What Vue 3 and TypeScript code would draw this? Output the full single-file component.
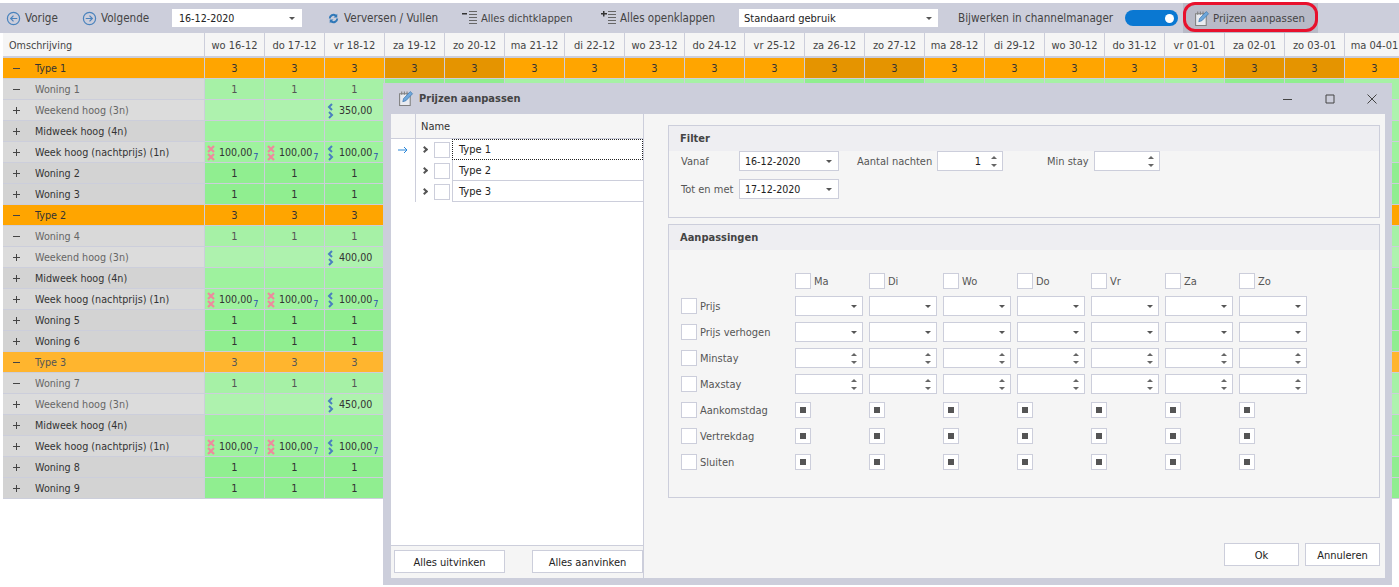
<template>
  <div class="page">
    <div class="toolbar">
      <span class="tool first">
        <svg class="nav-icon" viewBox="0 0 16 16"><circle cx="8" cy="8" r="6.500" /><path d="M12 8H5M8 5 5 8l3 3" /></svg>
        Vorige
      </span>
      <span class="tool next">
        <svg class="nav-icon" viewBox="0 0 16 16"><circle cx="8" cy="8" r="6.500" /><path d="M4 8h7M8 5l3 3-3 3" /></svg>
        Volgende
      </span>
      <div class="combo date-combo">16-12-2020<i class="caret"></i></div>
      <span class="tool refresh">
        <svg class="refresh-icon" viewBox="0 0 16 16"><path d="M3 8a5 5 0 0 1 8-4l1-1v4H8l1.500-1.500A3 3 0 0 0 5 8Z" /><path d="M13 8a5 5 0 0 1-8 4l-1 1V9h4l-1.500 1.500A3 3 0 0 0 11 8Z" /></svg>
        Verversen / Vullen
      </span>
      <span class="tool collapse">
        <svg class="tree-icon" viewBox="0 0 16 16"><path class="dark" d="M0 3h5v1.500H0Z" /><path d="M7 1.500h8M7 4.500h8M7 7.500h8M7 10.500h8M7 13.500h8" /></svg>
        Alles dichtklappen
      </span>
      <span class="tool expand">
        <svg class="tree-icon" viewBox="0 0 16 16"><path class="dark" d="M2 1h1.500v2H6v1.500H3.500v2H2v-2H0V3h2Z" /><path d="M7 1.500h8M7 4.500h8M7 7.500h8M7 10.500h8M7 13.500h8" /></svg>
        Alles openklappen
      </span>
      <div class="combo mode-combo">Standaard gebruik<i class="caret"></i></div>
      <span class="sync-label">Bijwerken in channelmanager</span>
      <span class="toggle"><i></i></span>
      <span class="tool highlight">
        <svg class="edit-icon" viewBox="0 0 16 16">
          <path class="sheet" d="M1.500 3.500h10v11h-10Z" />
          <path class="rings" d="M3.500 1.500v3M6 1.500v3M8.500 1.500v3" />
          <path class="pen" d="m4.500 11 .8-3L11.500 1.500l2.200 2L7.500 10Z" />
        </svg>
        Prijzen aanpassen
      </span>
    </div>

    <div class="grid">
      <div class="row header-row">
        <div class="name-cell head">Omschrijving</div>
        <div v-for="day in days" :key="day.label" class="day-cell head">{{ day.label }}</div>
      </div>
      <div v-for="(row, rowIndex) in rows" :key="row.id" class="row" :class="[row.kind, row.tone]">
        <div class="name-cell">
          <svg class="sign" viewBox="0 0 7 7">
            <path :d="row.open ? 'M0 3.500h7' : 'M0 3.500h7M3.500 0v7'" />
          </svg>
          <span class="row-name">{{ row.name }}</span>
        </div>
        <div
          v-for="(day, index) in days"
          :key="day.label"
          class="day-cell"
          :class="{ weekend: day.weekend }"
        >
          <template v-if="row.kind === 'rate'">
            <span v-if="row.rates && row.rates[index]" class="rate-value">
              <svg class="rate-icon" :class="row.rates[index]?.mark" viewBox="0 0 8 16">
                <path v-if="row.rates[index]?.mark === 'open'" d="M5 1 2 4l3 3M2 9l3 3-3 3" />
                <path v-else d="M1 1l6 6M7 1 1 7M1 9l6 6M7 9l-6 6" />
              </svg>
              {{ row.rates[index]?.value }}<sub v-if="row.rates[index]?.stay">7</sub>
            </span>
          </template>
          <!-- the dialog covers every later column below the first row -->
          <template v-else-if="rowIndex === 0 || index < 3">{{ row.count }}</template>
        </div>
      </div>
    </div>

    <div class="dialog">
      <div class="dialog-title">
        <svg class="edit-icon" viewBox="0 0 16 16">
          <path class="sheet" d="M1.500 3.500h10v11h-10Z" />
          <path class="rings" d="M3.500 1.500v3M6 1.500v3M8.500 1.500v3" />
          <path class="pen" d="m4.500 11 .8-3L11.500 1.500l2.200 2L7.500 10Z" />
        </svg>
        <strong>Prijzen aanpassen</strong>
        <div class="window-buttons">
          <svg viewBox="0 0 12 12"><path d="M1 6.500h9" /></svg>
          <svg viewBox="0 0 12 12"><path d="M2 2h8v8H2Z" /></svg>
          <svg viewBox="0 0 12 12"><path d="m1.500 1.500 9 9M10.500 1.500l-9 9" /></svg>
        </div>
      </div>
      <div class="dialog-body">
        <aside class="tree">
          <div class="tree-main">
            <div class="tree-head"><span class="indicator"></span><span class="tree-title">Name</span></div>
            <div v-for="(type, index) in types" :key="type" class="tree-row">
              <span class="indicator">
                <svg v-if="index === 0" viewBox="0 0 12 10"><path d="M1 5h9M7 2l3 3-3 3" /></svg>
              </span>
              <span class="chevron"></span>
              <span class="check"></span>
              <span class="tree-text" :class="{ focused: index === 0 }">{{ type }}</span>
            </div>
          </div>
          <div class="tree-footer">
            <button class="btn wide">Alles uitvinken</button>
            <button class="btn wide">Alles aanvinken</button>
          </div>
        </aside>

        <section class="editor">
          <div class="group filter">
            <div class="group-title">Filter</div>
            <div class="filter-body">
              <div class="filter-line">
                <label class="filter-label">Vanaf</label>
                <div class="combo boxed date">16-12-2020<i class="caret"></i></div>
                <label class="nights-label">Aantal nachten</label>
                <div class="spin boxed small">1<span class="arrows"><i></i><i></i></span></div>
                <label class="stay-label">Min stay</label>
                <div class="spin boxed small"><span class="arrows"><i></i><i></i></span></div>
              </div>
              <div class="filter-line">
                <label class="filter-label">Tot en met</label>
                <div class="combo boxed date">17-12-2020<i class="caret"></i></div>
              </div>
            </div>
          </div>

          <div class="group changes">
            <div class="group-title">Aanpassingen</div>
            <div class="matrix">
              <div class="matrix-row day-row">
                <span class="matrix-label"></span>
                <span v-for="day in weekDays" :key="day" class="matrix-cell day-name">
                  <span class="check"></span>{{ day }}
                </span>
              </div>
              <div v-for="line in fieldLines" :key="line.label" class="matrix-row field-row">
                <span class="matrix-label"><span class="check"></span>{{ line.label }}</span>
                <span v-for="day in weekDays" :key="day" class="matrix-cell">
                  <span v-if="line.type === 'combo'" class="combo boxed field"><i class="caret"></i></span>
                  <span v-else class="spin boxed field"><span class="arrows"><i></i><i></i></span></span>
                </span>
              </div>
              <div class="check-rows">
                <div v-for="line in checkLines" :key="line" class="matrix-row check-row">
                  <span class="matrix-label"><span class="check"></span>{{ line }}</span>
                  <span v-for="day in weekDays" :key="day" class="matrix-cell">
                    <span class="check mixed"><i></i></span>
                  </span>
                </div>
              </div>
            </div>
          </div>

          <div class="actions">
            <button class="btn action">Ok</button>
            <button class="btn action">Annuleren</button>
          </div>
        </section>
      </div>
    </div>
  </div>
</template>

<script setup lang="ts">
interface RateCell {
  mark: 'open' | 'closed'
  value: string
  stay: boolean
}

interface Row {
  id: string
  name: string
  kind: 'type' | 'unit' | 'rate'
  tone: string
  open: boolean
  count?: number
  rates?: (RateCell | null)[]
}

const labels = [
  'wo 16-12', 'do 17-12', 'vr 18-12', 'za 19-12', 'zo 20-12', 'ma 21-12', 'di 22-12',
  'wo 23-12', 'do 24-12', 'vr 25-12', 'za 26-12', 'zo 27-12', 'ma 28-12', 'di 29-12',
  'wo 30-12', 'do 31-12', 'vr 01-01', 'za 02-01', 'zo 03-01', 'ma 04-01',
]
const days = labels.map((label) => ({ label, weekend: /^(za|zo)/.test(label) }))

const types = ['Type 1', 'Type 2', 'Type 3']
const weekDays = ['Ma', 'Di', 'Wo', 'Do', 'Vr', 'Za', 'Zo']
const fieldLines = [
  { label: 'Prijs', type: 'combo' },
  { label: 'Prijs verhogen', type: 'combo' },
  { label: 'Minstay', type: 'spin' },
  { label: 'Maxstay', type: 'spin' },
]
const checkLines = ['Aankomstdag', 'Vertrekdag', 'Sluiten']

const nightly = (): RateCell[] => [
  { mark: 'closed', value: '100,00', stay: true },
  { mark: 'closed', value: '100,00', stay: true },
  { mark: 'open', value: '100,00', stay: true },
]

// each type block has the same shape, only names and the weekend price differ
const buildBlock = (type: number, first: number, weekend: string, typeTone: string): Row[] => [
  { id: `t${type}`, name: `Type ${type}`, kind: 'type', tone: typeTone, open: true, count: 3 },
  { id: `w${first}`, name: `Woning ${first}`, kind: 'unit', tone: 'faded', open: true, count: 1 },
  {
    id: `we${type}`,
    name: 'Weekend hoog (3n)',
    kind: 'rate',
    tone: 'palest',
    open: false,
    rates: [null, null, { mark: 'open', value: weekend, stay: false }],
  },
  { id: `mw${type}`, name: 'Midweek hoog (4n)', kind: 'rate', tone: 'soft', open: false, rates: [] },
  { id: `wk${type}`, name: 'Week hoog (nachtprijs) (1n)', kind: 'rate', tone: 'soft light', open: false, rates: nightly() },
  { id: `w${first + 1}`, name: `Woning ${first + 1}`, kind: 'unit', tone: '', open: false, count: 1 },
  { id: `w${first + 2}`, name: `Woning ${first + 2}`, kind: 'unit', tone: '', open: false, count: 1 },
]

const rows: Row[] = [
  ...buildBlock(1, 1, '350,00', ''),
  ...buildBlock(2, 4, '400,00', ''),
  ...buildBlock(3, 7, '450,00', 'muted'),
]
</script>

<style>
html,
body {
  margin: 0;
  background: #fff;
  overflow: hidden;
}
</style>

<style scoped>
.page {
  position: relative;
  width: 1399px;
  height: 587px;
  overflow: hidden;
  padding-top: 3px;
  box-sizing: border-box;
  font-family: "DejaVu Sans", "Noto Sans", sans-serif;
  font-stretch: condensed;
  font-size: 11px;
  color: #333;
  background: #fff;
}

.toolbar {
  display: flex;
  align-items: center;
  height: 30px;
  padding-left: 6px;
  background: #cccedb;
  color: #444;
  font-size: 11.600px;
  white-space: nowrap;
}

.tool {
  display: inline-flex;
  align-items: center;
  flex: none;
  gap: 4px;
}

.first { width: 76px; }
.next { width: 90px; }
.refresh { width: 136px; margin-left: 24px; gap: 3px; }
.collapse { width: 139px; gap: 3px; font-size: 11.100px; }
.expand { width: 138px; gap: 3px; font-size: 11.500px; }

.nav-icon {
  width: 15px;
  height: 15px;
  fill: none;
  stroke: #4a83bd;
  stroke-width: 1.300;
}

.refresh-icon {
  width: 15px;
  height: 15px;
  fill: #2f78b8;
}

.tree-icon {
  width: 16px;
  height: 16px;
  fill: none;
  stroke: #666;
}

.tree-icon .dark {
  fill: #333;
  stroke: none;
}

.edit-icon {
  width: 17px;
  height: 17px;
  flex: none;
}

.edit-icon .sheet {
  fill: #e9ebf0;
  stroke: #808080;
}

.edit-icon .rings {
  fill: none;
  stroke: #808080;
}

.edit-icon .pen {
  fill: #6fa8dc;
  stroke: #3f78b0;
  stroke-width: 0.700;
}

.combo {
  display: flex;
  align-items: center;
  justify-content: space-between;
  flex: none;
  box-sizing: border-box;
  background: #fff;
  color: #222;
  font-size: 11px;
}

.date-combo {
  width: 130px;
  height: 18px;
  padding: 0 6px 0 7px;
  font-size: 10.600px;
}

.mode-combo {
  width: 199px;
  height: 18px;
  padding: 0 5px;
}

.caret {
  width: 0;
  height: 0;
  margin-right: 1px;
  border-left: 3.500px solid transparent;
  border-right: 3.500px solid transparent;
  border-top: 3.500px solid #555;
}

.sync-label {
  flex: none;
  width: 167px;
  margin-left: 20px;
}

.toggle {
  position: relative;
  flex: none;
  width: 53px;
  height: 16px;
  border-radius: 8px;
  background: #0a78d2;
}

.toggle i {
  position: absolute;
  top: 3.500px;
  right: 4px;
  width: 9px;
  height: 9px;
  border-radius: 50%;
  background: #fff;
}

.highlight {
  position: relative;
  box-sizing: border-box;
  width: 135px;
  height: 30px;
  margin-left: 5px;
  padding-left: 11px;
  gap: 2px;
  background: #b8bac7;
  font-size: 11.300px;
}

.highlight::after {
  content: "";
  position: absolute;
  inset: -1px 0 1px 0;
  border: 3px solid #e8112d;
  border-radius: 12px;
}

.grid {
  margin-left: 3px;
}

.row {
  display: flex;
  height: 21px;
  line-height: 21px;
}

.header-row {
  height: 25px;
  line-height: 25px;
}

.name-cell {
  display: flex;
  align-items: center;
  flex: none;
  width: 202px;
  box-sizing: border-box;
  padding-top: 1px;
  border-right: 1px solid #cccedb;
  border-bottom: 1px solid #cccedb;
  background: #d3d3d3;
  font-size: 10.700px;
}

.day-cell {
  flex: none;
  width: 60px;
  box-sizing: border-box;
  border-right: 1px solid #cccedb;
  border-bottom: 1px solid #cccedb;
  text-align: center;
  white-space: nowrap;
  background: #90ee90;
}

.head {
  background: #f5f5f5;
  border-bottom-width: 2px;
  color: #444;
}

.name-cell.head {
  padding-left: 6px;
}

.sign {
  flex: none;
  width: 7px;
  height: 7px;
  margin: 0 15px 0 10px;
  fill: none;
  stroke: #444;
}

.row-name {
  color: #333;
}

.row.type .name-cell,
.row.type .day-cell {
  background: #ffa500;
}

.row.type .day-cell.weekend {
  background: #e59400;
}

.row.type.muted .name-cell,
.row.type.muted .day-cell {
  background: #ffb52e;
  color: #555;
}

.row.type.muted .day-cell.weekend {
  background: #eca420;
}

.row.type.muted .row-name {
  color: #555;
}

.row.faded .name-cell {
  background: #d9d9d9;
}

.row.faded .day-cell {
  background: #a6f1a6;
  color: #555;
}

.row.faded .day-cell.weekend {
  background: #90ee90;
}

.row.faded .row-name,
.row.palest .row-name {
  color: #666;
}

.row.palest .name-cell {
  background: #dcdcdc;
}

.row.palest .day-cell {
  background: #aef2ae;
}

.row.soft .day-cell {
  background: #9ef29e;
}

.row.light .name-cell {
  background: #d9d9d9;
}

.rate-value {
  display: flex;
  align-items: center;
  gap: 4px;
  padding-left: 2px;
  color: #333;
  font-size: 10.600px;
}

.rate-value sub {
  align-self: flex-end;
  margin-left: -3px;
  font-size: 9px;
  line-height: 12px;
  color: #2b4fb0;
  vertical-align: baseline;
}

.rate-icon {
  flex: none;
  width: 8px;
  height: 16px;
  fill: none;
  stroke-width: 2;
}

.rate-icon.open { stroke: #4a7fc0; }
.rate-icon.closed { stroke: #ee8a9e; stroke-width: 2.200; }

.dialog {
  position: absolute;
  top: 83px;
  left: 383px;
  width: 1009px;
  height: 502px;
  display: flex;
  flex-direction: column;
  background: #cccedb;
}

.dialog-title {
  display: flex;
  align-items: center;
  flex: none;
  gap: 4px;
  height: 31px;
  padding-left: 15px;
  color: #444;
}

.window-buttons {
  display: flex;
  gap: 30px;
  margin-left: auto;
  margin-right: 14px;
}

.window-buttons svg {
  width: 12px;
  height: 12px;
  fill: none;
  stroke: #444;
}

.dialog-body {
  display: flex;
  flex: none;
  height: 464px;
  margin: 0 7px 0 8px;
  background: #f5f5f5;
}

.tree {
  display: flex;
  flex-direction: column;
  flex: none;
  width: 253px;
  box-sizing: border-box;
  border-right: 1px solid #cccedb;
  background: #fff;
}

.tree-main {
  flex: 1;
}

.tree-head {
  display: flex;
  height: 25px;
  box-sizing: border-box;
  line-height: 25px;
  background: #f5f5f5;
  border-bottom: 1px solid #cccedb;
}

.indicator {
  display: flex;
  align-items: center;
  justify-content: center;
  flex: none;
  box-sizing: border-box;
  width: 25px;
  border-right: 1px solid #cccedb;
}

.indicator svg {
  width: 12px;
  height: 10px;
  fill: none;
  stroke: #2a86d8;
}

.tree-title {
  padding-left: 5px;
}

.tree-row {
  display: flex;
  align-items: center;
  height: 21px;
}

.tree-row .indicator {
  height: 21px;
}

.chevron {
  flex: none;
  width: 3px;
  height: 3px;
  margin: 0 7px 0 6px;
  border-top: 2px solid #555;
  border-right: 2px solid #555;
  transform: rotate(45deg);
}

.check {
  display: inline-flex;
  align-items: center;
  justify-content: center;
  flex: none;
  box-sizing: border-box;
  width: 16px;
  height: 16px;
  border: 1px solid #cccedb;
  background: #fff;
}

.check.mixed i {
  width: 6px;
  height: 6px;
  background: #555;
}

.tree-text {
  flex: 1;
  box-sizing: border-box;
  height: 21px;
  margin-left: 2px;
  padding-left: 6px;
  line-height: 21px;
  border-bottom: 1px solid #cccedb;
  border-left: 1px solid #cccedb;
  color: #222;
}

.tree-text.focused {
  line-height: 19px;
  border: 1px dotted #222;
}

.tree-footer {
  display: flex;
  justify-content: space-between;
  height: 33px;
  box-sizing: border-box;
  padding: 4px 0 0 3px;
  background: #f5f5f5;
  border-top: 1px solid #cccedb;
}

.btn {
  box-sizing: border-box;
  height: 23px;
  border: 1px solid #cccedb;
  background: #fff;
  font: inherit;
  color: #222;
  padding: 1px 0 0;
}

.btn.wide {
  width: 111px;
}

.editor {
  display: flex;
  flex: 1;
  flex-direction: column;
  padding: 11px 5px 5px 24px;
  background: #f5f5f5;
}

.group {
  flex: none;
  box-sizing: border-box;
  border: 1px solid #cccedb;
}

.group-title {
  height: 25px;
  padding-left: 11px;
  line-height: 26px;
  font-weight: 700;
  color: #444;
  background: #eeeef2;
}

.filter {
  height: 93px;
}

.filter-body {
  display: flex;
  flex-direction: column;
  gap: 8px;
}

.filter-line {
  display: flex;
  align-items: center;
  height: 20px;
}

.filter-label {
  flex: none;
  width: 70px;
  padding-left: 12px;
  box-sizing: border-box;
  color: #555;
}

.boxed {
  box-sizing: border-box;
  height: 20px;
  border: 1px solid #cccedb;
  background: #fff;
}

.date {
  width: 100px;
  padding: 0 5px;
  font-size: 10.600px;
}

.nights-label {
  flex: none;
  width: 74px;
  margin: 0 6px 0 18px;
  white-space: nowrap;
  color: #555;
}

.stay-label {
  flex: none;
  width: 40px;
  margin: 0 7px 0 44px;
  white-space: nowrap;
  color: #555;
}

.spin {
  display: flex;
  align-items: center;
  justify-content: flex-end;
  color: #222;
}

.small {
  width: 66px;
}

.arrows {
  display: flex;
  flex-direction: column;
  gap: 5px;
  margin: 0 5px 0 10px;
}

.arrows i {
  width: 0;
  height: 0;
  border-left: 3px solid transparent;
  border-right: 3px solid transparent;
}

.arrows i:first-child {
  border-bottom: 3px solid #666;
}

.arrows i:last-child {
  border-top: 3px solid #666;
}

.changes {
  height: 274px;
  margin-top: 6px;
}

.matrix {
  padding: 23px 0 0 12px;
}

.matrix-row {
  display: flex;
  align-items: center;
}

.matrix-label {
  display: flex;
  align-items: center;
  gap: 3px;
  width: 114px;
  flex: none;
  color: #555;
}

.matrix-cell {
  display: flex;
  align-items: center;
  flex: none;
  width: 74px;
}

.day-name {
  gap: 3px;
  color: #555;
}

.day-row {
  height: 16px;
  margin-bottom: 7px;
}

.field-row {
  height: 20px;
  margin-bottom: 6px;
}

.field {
  display: flex;
  width: 68px;
}

.combo.field {
  justify-content: flex-end;
  padding-right: 4px;
}

.check-rows {
  padding-top: 2px;
}

.check-row {
  height: 16px;
  margin-bottom: 10px;
}

.actions {
  display: flex;
  justify-content: flex-end;
  gap: 6px;
  margin-top: 45px;
}

.btn.action {
  width: 75px;
}
</style>
